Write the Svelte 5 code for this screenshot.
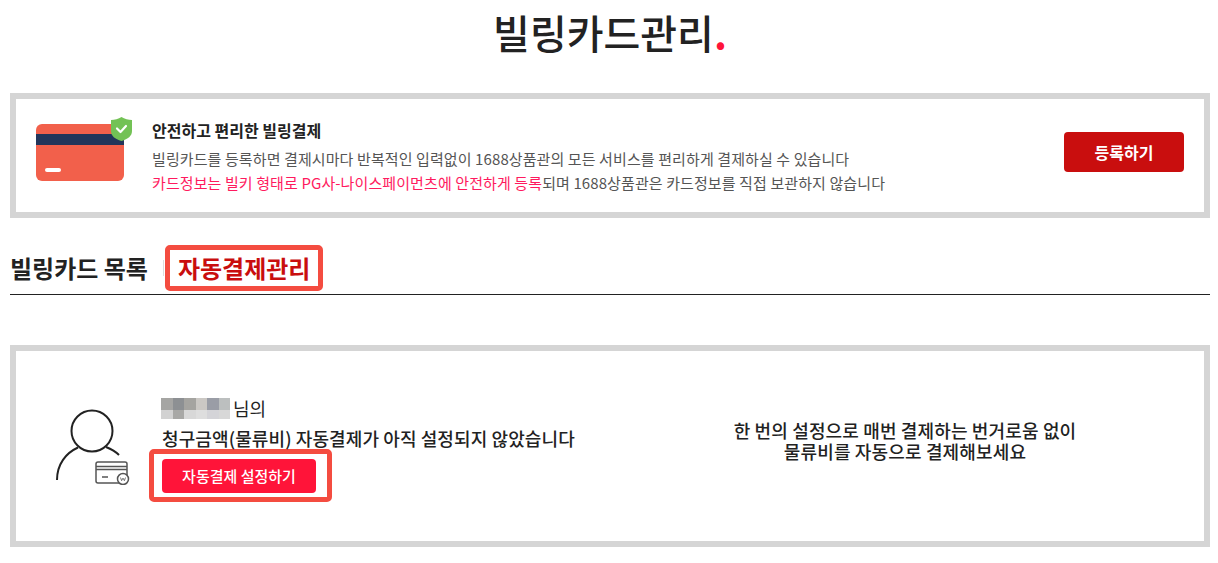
<script>
  const mosaic = [
    '#a5a5a3', '#8d9093', '#a5a4a0', '#cbc8c4', '#9a9da6', '#bcbfbf',
    '#d2d2d2', '#a8a8a6', '#d8d8d8', '#dedede', '#d4d4d8', '#d8d8d8'
  ];
</script>

<div class="page">
  <h1 class="title">빌링카드관리<span class="dot">.</span></h1>

  <section class="box notice">
    <svg class="card-icon" viewBox="0 0 96 64" width="96" height="64" aria-hidden="true">
      <rect x="0" y="7" width="88" height="57" rx="6" fill="#f2604b" />
      <rect x="0" y="17" width="88" height="11" fill="#22355a" />
      <rect x="9" y="51" width="16" height="4" rx="2" fill="#fff" />
      <path d="M85.500 0c3 2 7 3 10.500 3v11c0 5-4 8-10.500 10c-6.500-2-10.500-5-10.500-10V3c3.500 0 7.500-1 10.500-3z" fill="#73c255" />
      <path d="M81 11.500l3.500 3.500l5.500-6" fill="none" stroke="#fff" stroke-width="2.200" stroke-linecap="round" stroke-linejoin="round" />
    </svg>
    <div class="notice-text">
      <h3>안전하고 편리한 빌링결제</h3>
      <p>빌링카드를 등록하면 결제시마다 반복적인 입력없이 1688상품관의 모든 서비스를 편리하게 결제하실 수 있습니다</p>
      <p><span class="pink">카드정보는 빌키 형태로 PG사-나이스페이먼츠에 안전하게 등록</span>되며 1688상품관은 카드정보를 직접 보관하지 않습니다</p>
    </div>
    <button class="btn-register">등록하기</button>
  </section>

  <div class="tabs">
    <span class="tab">빌링카드 목록</span>
    <span class="tab-sep"></span>
    <span class="tab active">자동결제관리</span>
  </div>

  <section class="box auto">
    <svg class="user-icon" viewBox="0 0 76 76" width="76" height="76" aria-hidden="true">
      <g fill="none" stroke="#222" stroke-width="2">
        <circle cx="36" cy="22" r="20.500" />
        <path d="M1 71C1 55 10 44 22 38.500" />
        <path d="M50 38c5 2 9 4 13 8" />
      </g>
      <g fill="none" stroke="#555" stroke-width="1.500">
        <rect x="40" y="53" width="31" height="21" rx="2" fill="#fff" />
        <path d="M40 57.500h31M40 60.500h31M46 68h6" />
        <circle cx="67" cy="70" r="5.500" fill="#fff" />
      </g>
      <path d="M64.500 68.500l1.100 3.200l1.400-2.600l1.400 2.600l1.100-3.200" fill="none" stroke="#555" stroke-width="0.800" />
    </svg>
    <div class="auto-main">
      <div class="name-line">
        <span class="mosaic">
          {#each mosaic as c}
            <i style="background: {c}"></i>
          {/each}
        </span>
        <span>님의</span>
      </div>
      <p class="auto-msg">청구금액(물류비) 자동결제가 아직 설정되지 않았습니다</p>
      <div class="btn-frame">
        <button class="btn-setup">자동결제 설정하기</button>
      </div>
    </div>
    <p class="auto-side">한 번의 설정으로 매번 결제하는 번거로움 없이<br />물류비를 자동으로 결제해보세요</p>
  </section>
</div>

<style>
  :global(body) {
    margin: 0;
    background: #fff;
    font-family: "Noto Sans CJK KR", "Noto Sans", sans-serif;
    color: #222;
  }

  .page {
    width: 1200px;
    margin-left: 10px;
    height: 563px;
    overflow: hidden;
  }

  .title {
    margin: 0;
    height: 93px;
    padding-top: 3px;
    box-sizing: border-box;
    text-align: center;
    font-size: 40px;
    line-height: 58px;
    font-weight: 500;
    color: #222;
  }

  .dot {
    color: #ff1439;
    font-weight: 700;
  }

  .box {
    box-sizing: border-box;
    border: 6px solid #d5d5d5;
    background: #fff;
    display: flex;
    align-items: center;
  }

  .notice {
    height: 125px;
    padding: 0 20px;
  }

  .card-icon {
    flex: none;
    margin-right: 20px;
    margin-top: -13px;
  }

  .notice-text {
    flex: 1;
    margin-top: 3px;
    font-size: 15px;
    color: #555;
  }

  .notice-text h3 {
    margin: 0 0 7px;
    font-size: 16px;
    line-height: 20px;
    font-weight: 700;
    color: #222;
  }

  .notice-text p {
    margin: 0;
    line-height: 24px;
    letter-spacing: 0.1px;
  }

  .pink {
    color: #ff1a5e;
  }

  .btn-register {
    width: 120px;
    height: 40px;
    margin-bottom: 8px;
    border: 0;
    border-radius: 4px;
    background: #c90e0e;
    color: #fff;
    font: 700 16px "Noto Sans CJK KR", sans-serif;
  }

  .tabs {
    display: flex;
    align-items: center;
    height: 77px;
    padding-top: 24px;
    box-sizing: border-box;
    border-bottom: 1px solid #222;
    margin-bottom: 50px;
  }

  .tab {
    font-size: 24px;
    font-weight: 700;
    line-height: 32px;
    color: #222;
  }

  .tab-sep {
    width: 1px;
    height: 16px;
    background: #ddd;
    margin: 0 1px 0 15px;
  }

  .tab.active {
    box-sizing: border-box;
    height: 46px;
    padding: 0 8px;
    border: 5px solid #f44c40;
    border-radius: 5px;
    line-height: 36px;
    color: #c90e0e;
    white-space: nowrap;
  }

  .auto {
    height: 202px;
    padding-left: 40px;
  }

  .user-icon {
    flex: none;
    margin-right: 30px;
    margin-top: 2px;
  }

  .auto-main {
    width: 484px;
    flex: none;
    font-size: 18px;
    margin-top: 6px;
  }

  .name-line {
    display: flex;
    align-items: center;
    gap: 3px;
    height: 24px;
  }

  .mosaic {
    display: grid;
    grid-template-columns: repeat(6, 11.500px);
    grid-template-rows: 12px 9px;
    margin-left: -1px;
  }

  .mosaic i {
    display: block;
  }

  .auto-msg {
    margin: 6px 0 0;
    line-height: 24px;
    font-weight: 500;
    letter-spacing: 0.1px;
    white-space: nowrap;
  }

  .btn-frame {
    box-sizing: border-box;
    width: 183px;
    height: 53px;
    margin: -1px 0 0 -13px;
    padding: 4px 8px;
    border: 5px solid #f44c40;
    border-radius: 5px;
    display: flex;
    align-items: center;
  }

  .btn-setup {
    width: 154px;
    height: 34px;
    border: 0;
    border-radius: 4px;
    background: #ff1439;
    color: #fff;
    font: 500 15px "Noto Sans CJK KR", sans-serif;
  }

  .auto-side {
    flex: 1;
    margin: 0 0 10px;
    padding-right: 40px;
    text-align: center;
    font-size: 18px;
    line-height: 21px;
    font-weight: 500;
    letter-spacing: 0.15px;
  }
</style>
